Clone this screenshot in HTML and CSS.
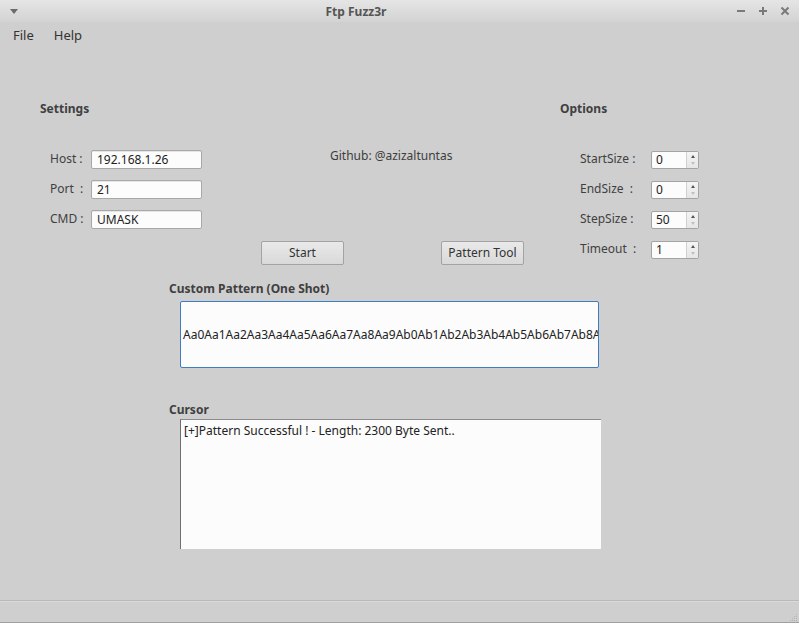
FILE: index.html
```html
<!DOCTYPE html>
<html>
<head>
<meta charset="utf-8">
<title>Ftp Fuzz3r</title>
<link rel="stylesheet" href="styles.css">
</head>
<body>
<div class="window">
  <div class="titlebar">
    <div class="tb-menu"><svg width="8" height="5" viewBox="0 0 8 5"><path d="M0 0h8L4 5z" fill="#6a6a6a"/></svg></div>
    <div class="tb-title">Ftp Fuzz3r</div>
    <div class="tb-controls">
      <svg width="10" height="10" viewBox="0 0 10 10"><path d="M1 5h8" stroke="#7a7a7a" stroke-width="2"/></svg>
      <svg width="10" height="10" viewBox="0 0 10 10"><path d="M1 5h8M5 1v8" stroke="#7a7a7a" stroke-width="2"/></svg>
      <svg width="10" height="10" viewBox="0 0 10 10"><path d="M1.5 1.5l7 7M8.5 1.5l-7 7" stroke="#7a7a7a" stroke-width="2"/></svg>
    </div>
  </div>
  <div class="menubar">
    <span class="menu-item">File</span>
    <span class="menu-item">Help</span>
  </div>
  <div class="main">
    <div class="top">
      <div class="col settings">
        <div class="heading">Settings</div>
        <div class="form">
          <div class="row"><span class="label">Host :</span><div class="input">192.168.1.26</div></div>
          <div class="row"><span class="label">Port &nbsp;:</span><div class="input">21</div></div>
          <div class="row"><span class="label">CMD :</span><div class="input">UMASK</div></div>
        </div>
      </div>
      <div class="col center">
        <div class="github">Github: @azizaltuntas</div>
        <div class="buttons">
          <div class="button">Start</div>
          <div class="button">Pattern Tool</div>
        </div>
      </div>
      <div class="col options">
        <div class="heading">Options</div>
        <div class="form">
          <div class="row"><span class="label wide">StartSize :</span><div class="spin"><span class="spin-val">0</span><span class="spin-btn"><i class="up"></i><i class="down"></i></span></div></div>
          <div class="row"><span class="label wide">EndSize &nbsp;:</span><div class="spin"><span class="spin-val">0</span><span class="spin-btn"><i class="up"></i><i class="down"></i></span></div></div>
          <div class="row"><span class="label wide">StepSize :</span><div class="spin"><span class="spin-val">50</span><span class="spin-btn"><i class="up"></i><i class="down"></i></span></div></div>
          <div class="row"><span class="label wide">Timeout &nbsp;:</span><div class="spin"><span class="spin-val">1</span><span class="spin-btn"><i class="up"></i><i class="down"></i></span></div></div>
        </div>
      </div>
    </div>
    <div class="section pattern-section">
      <div class="heading">Custom Pattern (One Shot)</div>
      <div class="pattern-box"><span>Aa0Aa1Aa2Aa3Aa4Aa5Aa6Aa7Aa8Aa9Ab0Ab1Ab2Ab3Ab4Ab5Ab6Ab7Ab8Ab9Ac0Ac1Ac2Ac3Ac4Ac5Ac6Ac7Ac8Ac9</span></div>
    </div>
    <div class="section cursor-section">
      <div class="heading">Cursor</div>
      <div class="cursor-box">[+]Pattern Successful ! - Length: 2300 Byte Sent..</div>
    </div>
  </div>
  <div class="statusbar">
    <svg class="grip" width="10" height="10" viewBox="0 0 10 10">
      <g fill="#b4b4b4"><rect x="8" y="2" width="1" height="1"/><rect x="6" y="4" width="1" height="1"/><rect x="8" y="4" width="1" height="1"/><rect x="4" y="6" width="1" height="1"/><rect x="6" y="6" width="1" height="1"/><rect x="8" y="6" width="1" height="1"/><rect x="2" y="8" width="1" height="1"/><rect x="4" y="8" width="1" height="1"/><rect x="6" y="8" width="1" height="1"/><rect x="8" y="8" width="1" height="1"/></g>
    </svg>
  </div>
</div>
</body>
</html>
```

FILE: styles.css
```css
* { box-sizing: border-box; }
html, body {
  margin: 0;
  padding: 0;
  width: 799px;
  height: 623px;
  overflow: hidden;
}
body {
  font-family: "Noto Sans", "Open Sans", sans-serif;
  font-size: 12px;
  color: #3b3b3b;
  background: #cfcfcf;
}
.window {
  display: flex;
  flex-direction: column;
  width: 799px;
  height: 623px;
}
.titlebar {
  height: 22px;
  display: flex;
  align-items: center;
  background: linear-gradient(#e5e5e5, #d3d3d3);
}
.tb-menu {
  width: 26px;
  padding-left: 10px;
  display: flex;
  align-items: center;
}
.tb-title {
  flex: 1;
  text-align: center;
  font-weight: bold;
  color: #555;
  padding-right: 50px;
}
.tb-controls {
  display: flex;
  gap: 12px;
  padding-right: 9px;
  align-items: center;
}
.tb-controls svg { display: block; }
.menubar {
  height: 26px;
  display: flex;
  align-items: center;
  padding-left: 13px;
  gap: 20px;
  color: #333;
  font-size: 13px;
}
.main {
  flex: 1;
  padding-top: 53px;
}
.top {
  display: flex;
  padding-left: 40px;
}
.heading {
  font-weight: bold;
  color: #404040;
  line-height: 16px;
  height: 16px;
}
.col.settings { width: 221px; }
.col.center { width: 299px; padding-top: 47px; }
.col.options { width: 200px; }
.form {
  margin-top: 33px;
  display: flex;
  flex-direction: column;
  gap: 11px;
}
.settings .form { padding-left: 10px; }
.options .form { padding-left: 20px; }
.row {
  display: flex;
  align-items: center;
  height: 19px;
}
.label {
  width: 41px;
  color: #3f3f3f;
  white-space: pre;
  line-height: 16px;
  margin-top: -2px;
}
.label.wide { width: 71px; }
.input {
  width: 111px;
  height: 19px;
  background: #fcfcfc;
  border: 1px solid #a8a8a8;
  border-radius: 2px;
  padding: 0 5px;
  line-height: 17px;
  color: #222;
  box-shadow: inset 0 1px 0 #e6e6e6;
}
.github {
  padding-left: 69px;
  line-height: 16px;
  color: #3d3d3d;
}
.buttons {
  margin-top: 77px;
  display: flex;
  gap: 97px;
}
.button {
  width: 83px;
  height: 24px;
  border: 1px solid #a3a3a3;
  border-radius: 2px;
  background: linear-gradient(#e9e9e9, #d9d9d9);
  text-align: center;
  line-height: 22px;
  color: #333;
}
.spin {
  width: 48px;
  height: 18px;
  display: flex;
  background: #fcfcfc;
  border: 1px solid #a4a4a4;
  border-radius: 2px;
}
.spin-val {
  flex: 1;
  padding-left: 4px;
  line-height: 16px;
  color: #222;
}
.spin-btn {
  width: 12px;
  border-left: 1px solid #d0d0d0;
  background: linear-gradient(#f4f4f4, #e6e6e6);
  display: flex;
  flex-direction: column;
  align-items: center;
  justify-content: space-between;
  padding: 3px 0 3px;
}
.spin-btn i {
  display: block;
  width: 0;
  height: 0;
  border-left: 2px solid transparent;
  border-right: 2px solid transparent;
}
.spin-btn .up { border-bottom: 3px solid #555; }
.spin-btn .down { border-top: 3px solid #c0c0c0; }
.section {
  padding-left: 169px;
}
.pattern-section { margin-top: 16px; }
.pattern-box {
  margin-top: 4px;
  margin-left: 11px;
  width: 419px;
  height: 67px;
  background: #fcfcfc;
  border: 1px solid #3c7dc4;
  border-radius: 2px;
  display: flex;
  align-items: center;
  padding-left: 2px;
  overflow: hidden;
  white-space: nowrap;
  color: #222;
}
.cursor-section { margin-top: 34px; }
.cursor-box {
  margin-top: 1px;
  margin-left: 11px;
  width: 421px;
  height: 130px;
  background: #fcfcfc;
  border-top: 1px solid #8c8c8c;
  border-left: 1px solid #6f6f6f;
  padding: 2px 0 0 3px;
  line-height: 17px;
  color: #222;
}
.statusbar {
  height: 23px;
  border-top: 1px solid #b9b9b9;
  border-bottom: 1px solid #a0a0a0;
  box-shadow: inset 0 1px 0 #dadada;
  display: flex;
  justify-content: flex-end;
  align-items: flex-end;
}
.grip { display: block; margin: 0 1px 0 0; }
```
